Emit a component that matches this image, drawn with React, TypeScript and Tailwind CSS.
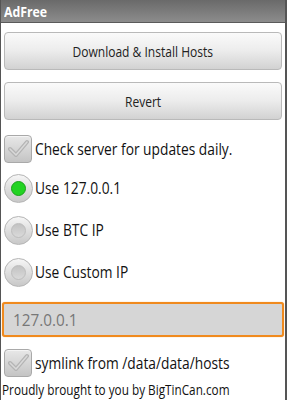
import React from "react";

function CheckBox() {
  return (
    <div className="w-[28px] h-[28px] rounded-[4px] border border-[#a9a9a9] bg-gradient-to-b from-[#e8e8e8] to-[#c4c4c4] flex items-center justify-center shrink-0 shadow-[inset_0_1px_0_#f4f4f4]">
      <svg width="22" height="20" viewBox="0 0 22 20">
        <path d="M3 10 L9 16 L20 3" fill="none" stroke="#b4b4b4" strokeWidth="4" strokeLinecap="round" strokeLinejoin="round" />
        <path d="M3 10 L9 16 L20 3" fill="none" stroke="#d9d9d9" strokeWidth="1.5" strokeLinecap="round" strokeLinejoin="round" />
      </svg>
    </div>
  );
}

function Radio({ on }: { on?: boolean }) {
  return (
    <div className="w-[29px] h-[29px] rounded-full border border-[#b5b5b5] bg-gradient-to-b from-[#f6f6f6] to-[#c8c8c8] flex items-center justify-center shrink-0">
      <div
        className={
          on
            ? "w-[15px] h-[15px] rounded-full bg-[#22d322] border border-[#19a019]"
            : "w-[15px] h-[15px] rounded-full bg-gradient-to-b from-[#c2c2c2] to-[#dadada] border border-[#bdbdbd]"
        }
      />
    </div>
  );
}

function Btn({ children }: { children: React.ReactNode }) {
  return (
    <div className="h-[38px] rounded-[4px] border border-[#b9b9b9] bg-gradient-to-b from-[#fafafa] via-[#ececec] to-[#d2d2d2] flex items-center justify-center text-[14px] text-[#222]">
      <span className="inline-block whitespace-nowrap scale-x-[0.86]">{children}</span>
    </div>
  );
}

function Label({ children }: { children: React.ReactNode }) {
  return (
    <span className="inline-block whitespace-nowrap origin-left scale-x-[0.81] text-[17px] text-[#111]">
      {children}
    </span>
  );
}

export default function App() {
  return (
    <div
      className="w-[287px] h-[400px] bg-white border-l border-r-2 border-[#555] flex flex-col overflow-hidden"
      style={{ fontFamily: '"Open Sans", "Noto Sans", sans-serif' }}
    >
      <div className="h-[23px] bg-gradient-to-b from-[#6a6a6a] to-[#8c8c8c] border-b border-[#5a5a5a] flex items-center px-[3px] text-white font-bold text-[15px]">
        <span className="inline-block origin-left scale-x-[0.82]">AdFree</span>
      </div>
      <div className="flex flex-col px-[3px] pt-[9px]">
        <Btn>Download &amp; Install Hosts</Btn>
        <div className="h-[12px]" />
        <Btn>Revert</Btn>
        <div className="flex items-center gap-[3px] mt-[14px] h-[30px]">
          <CheckBox />
          <Label>Check server for updates daily.</Label>
        </div>
        <div className="flex items-center gap-[2px] mt-[8px] h-[32px]">
          <Radio on />
          <Label>Use 127.0.0.1</Label>
        </div>
        <div className="flex items-center gap-[2px] mt-[10px] h-[32px]">
          <Radio />
          <Label>Use BTC IP</Label>
        </div>
        <div className="flex items-center gap-[2px] mt-[10px] h-[32px]">
          <Radio />
          <Label>Use Custom IP</Label>
        </div>
      </div>
      <div className="mx-[1px] mt-[14px] h-[35px] rounded-[3px] border-2 border-[#f08a1e] bg-[#d6d6d6] flex items-center px-[9px] text-[17px] text-[#777] shadow-[0_0_1px_#f5a040]">
        <span className="inline-block origin-left scale-x-[0.9]">127.0.0.1</span>
      </div>
      <div className="flex items-center gap-[3px] px-[3px] mt-[11px] h-[30px]">
        <CheckBox />
        <Label>symlink from /data/data/hosts</Label>
      </div>
      <div className="px-[1px] mt-[2px] text-[14px] text-[#111] leading-[20px]">
        <span className="inline-block whitespace-nowrap origin-left scale-x-[0.84]">
          Proudly brought to you by BigTinCan.com
        </span>
      </div>
    </div>
  );
}
